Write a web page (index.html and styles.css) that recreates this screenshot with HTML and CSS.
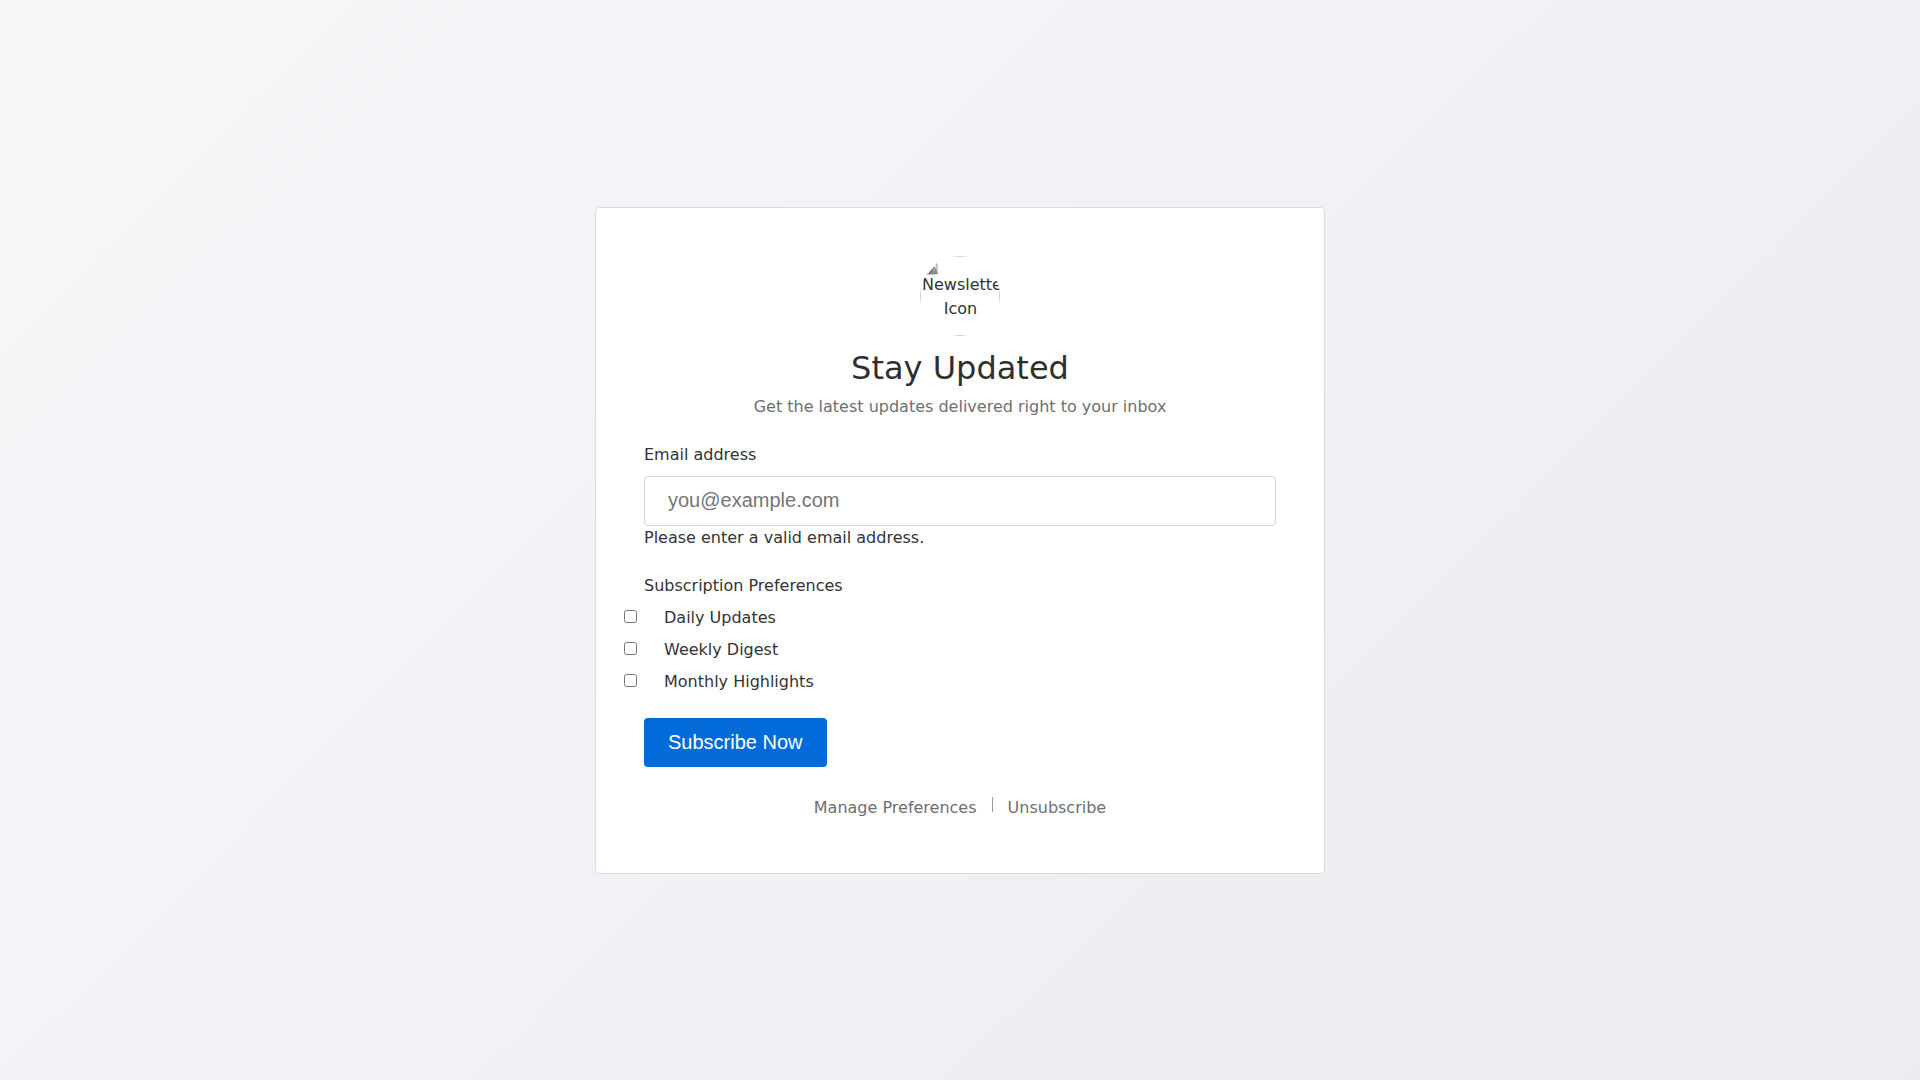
FILE: index.html
```html
<!DOCTYPE html>
<html lang="en">
<head>
<meta charset="utf-8">
<title>Stay Updated</title>
<link rel="stylesheet" href="styles.css">
</head>
<body>
<main class="card">
  <div class="icon-circle">
    <div class="broken">
      <svg class="broken-glyph" width="16" height="16" viewBox="0 0 16 16">
        <path d="M2 1h8l4 4v10H2z" fill="#f4f4f4" stroke="#9a9a9a" stroke-width="1"/>
        <path d="M10 1v4h4" fill="none" stroke="#9a9a9a" stroke-width="1"/>
        <path d="M5 15l4-5 1.5 2 2-3 2.5 6z" fill="#8a8a8a"/>
        <path d="M6 15L12 8" stroke="#6f6f6f" stroke-width="1.2"/>
      </svg>
      <div class="alt-text">Newsletter Icon</div>
    </div>
  </div>
  <h1 class="title">Stay Updated</h1>
  <p class="subtitle">Get the latest updates delivered right to your inbox</p>

  <form class="form">
    <label class="field-label" for="email">Email address</label>
    <input class="email-input" id="email" type="email" placeholder="you@example.com">
    <p class="error-text">Please enter a valid email address.</p>

    <div class="prefs-label">Subscription Preferences</div>
    <div class="checks">
      <label class="check-row"><input type="checkbox" class="check"><span>Daily Updates</span></label>
      <label class="check-row"><input type="checkbox" class="check"><span>Weekly Digest</span></label>
      <label class="check-row"><input type="checkbox" class="check"><span>Monthly Highlights</span></label>
    </div>

    <button type="button" class="btn">Subscribe Now</button>
  </form>

  <nav class="links">
    <a href="#" class="link">Manage Preferences</a>
    <span class="divider"></span>
    <a href="#" class="link">Unsubscribe</a>
  </nav>
</main>
</body>
</html>
```

FILE: styles.css
```css
* {
  box-sizing: border-box;
}

html, body {
  margin: 0;
  padding: 0;
}

body {
  min-height: 100vh;
  display: flex;
  align-items: center;
  justify-content: center;
  background: linear-gradient(135deg, #f6f7f9 0%, #eaecf0 100%);
  font-family: "DejaVu Sans", sans-serif;
  font-size: 16px;
  line-height: 24px;
  color: #333333;
}

.card {
  width: 730px;
  background: #ffffff;
  border: 1px solid #dcdcdc;
  border-radius: 4px;
  padding: 48px 48px 53px;
  text-align: center;
}

.icon-circle {
  width: 80px;
  height: 80px;
  margin: 0 auto;
  border-radius: 50%;
  overflow: hidden;
}

.broken {
  width: 80px;
  height: 80px;
  border: 1px solid #cfcfcf;
  padding: 0 0 0 1px;
  text-align: center;
  color: #333333;
}

.broken-glyph {
  display: block;
  margin: 2px 0 0 1px;
}

.alt-text {
  margin-top: -2px;
  line-height: 24px;
  font-size: 16px;
  white-space: normal;
}

.title {
  margin: 14px 0 0;
  font-size: 32px;
  line-height: 36px;
  font-weight: 400;
  color: #2f2f2f;
}

.subtitle {
  margin: 9px 0 0;
  color: #6c6f73;
}

.form {
  text-align: left;
  margin-top: 24px;
}

.field-label {
  display: block;
  color: #333333;
}

.email-input {
  display: block;
  width: 100%;
  height: 50px;
  margin-top: 9px;
  padding: 0 23px;
  border: 1px solid #d6d6d6;
  border-radius: 4px;
  font-family: "Liberation Sans", Arial, sans-serif;
  font-size: 20px;
  color: #333333;
  background: #ffffff;
  outline: none;
}

.email-input::placeholder {
  color: #757575;
}

.error-text {
  margin: 0;
  color: #333333;
}

.prefs-label {
  margin-top: 24px;
}

.checks {
  margin-top: 8px;
  display: flex;
  flex-direction: column;
  gap: 8px;
}

.check-row {
  display: flex;
  align-items: center;
  height: 24px;
}

.check {
  width: 13px;
  height: 13px;
  margin: -3px 27px 0 -20px;
  flex: none;
}

.btn {
  display: block;
  margin-top: 24px;
  height: 49px;
  padding: 0 24px;
  border: none;
  border-radius: 4px;
  background: #036ad9;
  color: #ffffff;
  font-family: "Liberation Sans", Arial, sans-serif;
  font-size: 20px;
  cursor: pointer;
}

.links {
  margin-top: 29px;
  display: flex;
  justify-content: center;
  align-items: center;
  height: 24px;
}

.link {
  color: #6c6f73;
  text-decoration: none;
}

.divider {
  width: 1px;
  height: 15px;
  margin: -7px 15px 0;
  background: #9a9a9a;
}
```
